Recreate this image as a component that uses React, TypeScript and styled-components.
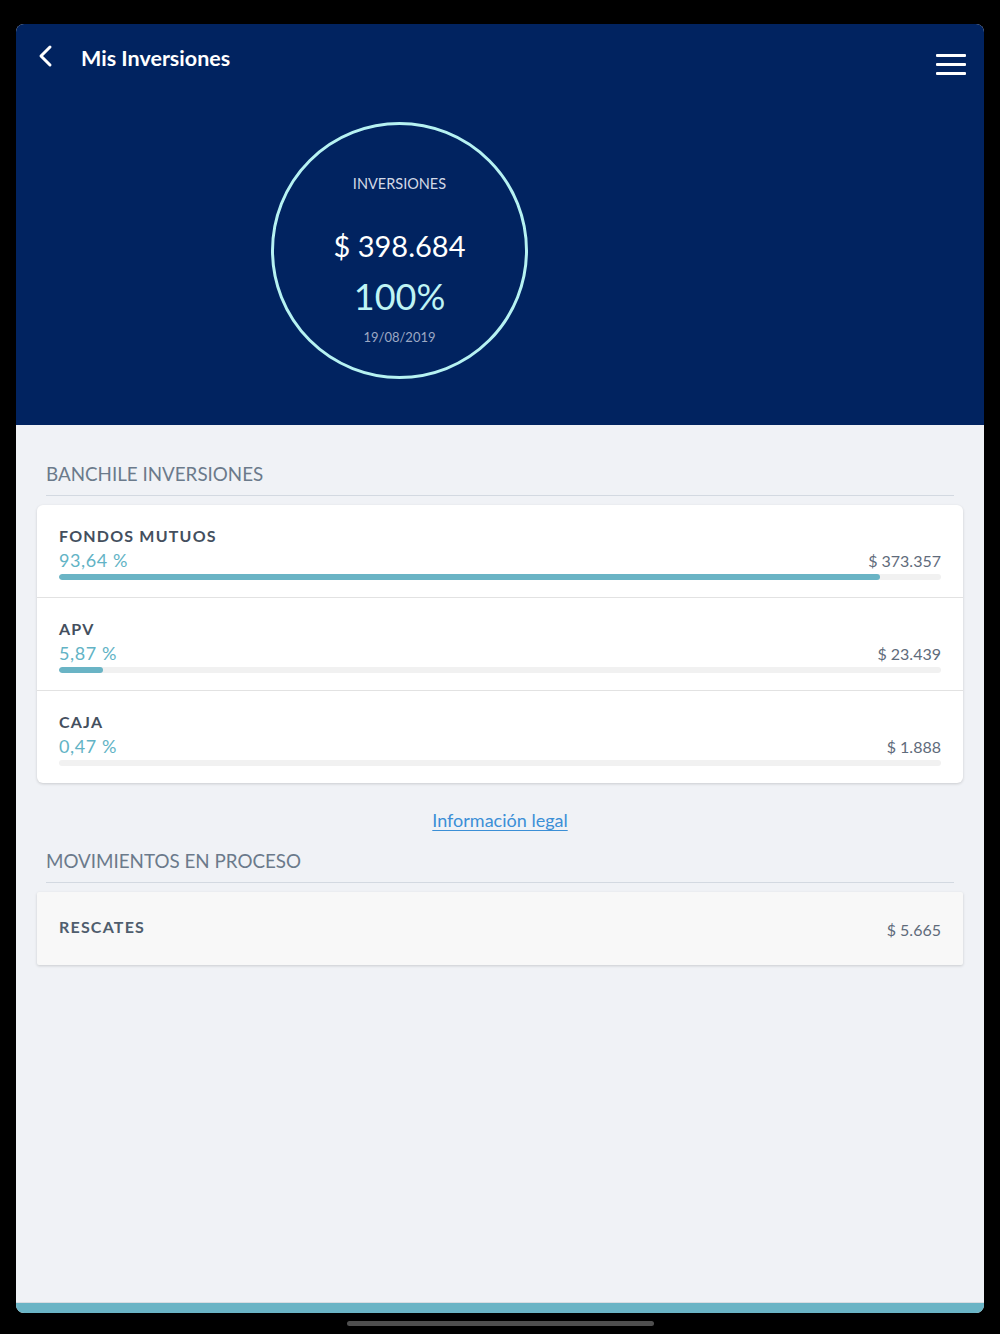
import React from 'react'
import styled, { createGlobalStyle } from 'styled-components'

const GlobalStyle = createGlobalStyle`
    html, body {
        margin: 0;
        padding: 0;
        background: #000;
    }
    body {
        font-family: Lato, "Open Sans", sans-serif;
    }
`

const Device = styled.div`
    width: 1000px;
    height: 1334px;
    background: #000;
    padding-top: 24px;
    box-sizing: border-box;
    display: flex;
    flex-direction: column;
    align-items: center;
`

const Screen = styled.div`
    width: 968px;
    height: 1289px;
    border-radius: 8px;
    overflow: hidden;
    display: flex;
    flex-direction: column;
    background: #f0f2f6;
`

const Header = styled.header`
    height: 401px;
    background: #012360;
    flex-shrink: 0;
`

const TopBar = styled.div`
    height: 68px;
    display: flex;
    align-items: center;
    padding: 0 18px 0 22px;
`

const BackButton = styled.button`
    width: 16px;
    height: 24px;
    padding: 0;
    margin: -4px 0 0 0;
    border: 0;
    background: transparent;
    display: flex;
    cursor: pointer;
`

const Title = styled.h1`
    margin: 0 0 0 27px;
    font-size: 21.5px;
    line-height: 28px;
    font-weight: 700;
    color: #fff;
    flex: 1;
`

const Burger = styled.div`
    width: 30px;
    margin-top: 12px;
    display: flex;
    flex-direction: column;
    gap: 6px;
    span {
        display: block;
        height: 3px;
        background: #fff;
        border-radius: 1px;
    }
`

const Circle = styled.div`
    width: 257px;
    height: 257px;
    margin: 30px 0 0 255px;
    border: 3px solid #b6f2f2;
    border-radius: 50%;
    box-sizing: border-box;
    display: flex;
    flex-direction: column;
    align-items: center;
    padding-top: 50px;
    text-align: center;
`

const CircleLabel = styled.div`
    font-size: 14.5px;
    line-height: 18px;
    color: #d3d9e6;
`

const CircleAmount = styled.div`
    margin-top: 35px;
    font-size: 29px;
    line-height: 36px;
    color: #fff;
`

const CirclePercent = styled.div`
    margin-top: 10px;
    font-size: 36px;
    line-height: 44px;
    color: #bff4f4;
`

const CircleDate = styled.div`
    margin-top: 11px;
    font-size: 13px;
    line-height: 16px;
    color: #9ca8c4;
`

const Content = styled.main`
    flex: 1;
    padding: 38px 21px 0;
    display: flex;
    flex-direction: column;
`

const SectionTitle = styled.h2<{ $top?: number }>`
    margin: ${p => p.$top ?? 0}px 9px 9px;
    padding-bottom: 10px;
    border-bottom: 1px solid #d3d9e1;
    font-size: 18.8px;
    line-height: 22px;
    font-weight: 400;
    color: #6b7a8b;
`

const Card = styled.div<{ $muted?: boolean }>`
    background: ${p => (p.$muted ? '#f8f8f8' : '#fff')};
    border-radius: ${p => (p.$muted ? '2px' : '6px')};
    box-shadow: 0 1px 3px rgba(0, 0, 0, 0.16);
`

const Row = styled.div`
    padding: 21px 22px 17px;
    &:not(:last-child) {
        border-bottom: 1px solid #e2e2e2;
    }
`

const RowLabel = styled.div`
    font-size: 16px;
    line-height: 20px;
    font-weight: 700;
    letter-spacing: 1.2px;
    color: #444f5e;
`

const RowLine = styled.div`
    margin-top: 3px;
    height: 22px;
    display: flex;
    justify-content: space-between;
    align-items: baseline;
`

const Percent = styled.span`
    font-size: 18px;
    line-height: 22px;
    letter-spacing: 0.6px;
    color: #62b3c5;
`

const Amount = styled.span`
    font-size: 16px;
    line-height: 22px;
    color: #5f6b7b;
`

const Track = styled.div`
    margin-top: 3px;
    height: 6px;
    border-radius: 3px;
    background: #f1f1f1;
    overflow: hidden;
`

const Fill = styled.div`
    height: 100%;
    border-radius: 3px;
    background: #6ab4c5;
`

const LegalLink = styled.a`
    align-self: center;
    margin-top: 26px;
    font-size: 18px;
    line-height: 22px;
    color: #3b8fd6;
    text-decoration: underline;
    text-underline-offset: 3px;
    cursor: pointer;
`

const PendingRow = styled.div`
    height: 73px;
    padding: 0 22px;
    box-sizing: border-box;
    display: flex;
    align-items: center;
    justify-content: space-between;
`

const PendingLabel = styled(RowLabel)`
    color: #4f5d6d;
    margin-top: -3px;
`

const PendingAmount = styled(Amount)`
    margin-top: 3px;
`

const BottomBar = styled.div`
    height: 10px;
    flex-shrink: 0;
    background: #6ab4c5;
    border-top: 1px solid #d9dde2;
`

const HomeIndicator = styled.div`
    width: 307px;
    height: 5px;
    margin-top: 8px;
    border-radius: 3px;
    background: #4f4f4f;
`

const holdings = [
    { name: 'FONDOS MUTUOS', percent: '93,64 %', amount: '$ 373.357', share: 93.1 },
    { name: 'APV', percent: '5,87 %', amount: '$ 23.439', share: 5 },
    { name: 'CAJA', percent: '0,47 %', amount: '$ 1.888', share: 0 },
]

const App: React.FC = () => (
    <>
        <GlobalStyle />
        <Device>
            <Screen>
                <Header>
                    <TopBar>
                        <BackButton aria-label="Volver">
                            <svg width="16" height="24" viewBox="0 0 16 24">
                                <path d="M12 3 L3 12 L12 21" fill="none" stroke="#fff" strokeWidth="3" strokeLinecap="round" strokeLinejoin="round" />
                            </svg>
                        </BackButton>
                        <Title>Mis Inversiones</Title>
                        <Burger>
                            <span />
                            <span />
                            <span />
                        </Burger>
                    </TopBar>
                    <Circle>
                        <CircleLabel>INVERSIONES</CircleLabel>
                        <CircleAmount>$ 398.684</CircleAmount>
                        <CirclePercent>100%</CirclePercent>
                        <CircleDate>19/08/2019</CircleDate>
                    </Circle>
                </Header>
                <Content>
                    <SectionTitle>BANCHILE INVERSIONES</SectionTitle>
                    <Card>
                        {holdings.map(item => (
                            <Row key={item.name}>
                                <RowLabel>{item.name}</RowLabel>
                                <RowLine>
                                    <Percent>{item.percent}</Percent>
                                    <Amount>{item.amount}</Amount>
                                </RowLine>
                                <Track>
                                    <Fill style={{ width: `${item.share}%` }} />
                                </Track>
                            </Row>
                        ))}
                    </Card>
                    <LegalLink>Información legal</LegalLink>
                    <SectionTitle $top={19}>MOVIMIENTOS EN PROCESO</SectionTitle>
                    <Card $muted>
                        <PendingRow>
                            <PendingLabel>RESCATES</PendingLabel>
                            <PendingAmount>$ 5.665</PendingAmount>
                        </PendingRow>
                    </Card>
                </Content>
                <BottomBar />
            </Screen>
            <HomeIndicator />
        </Device>
    </>
)

export default App
